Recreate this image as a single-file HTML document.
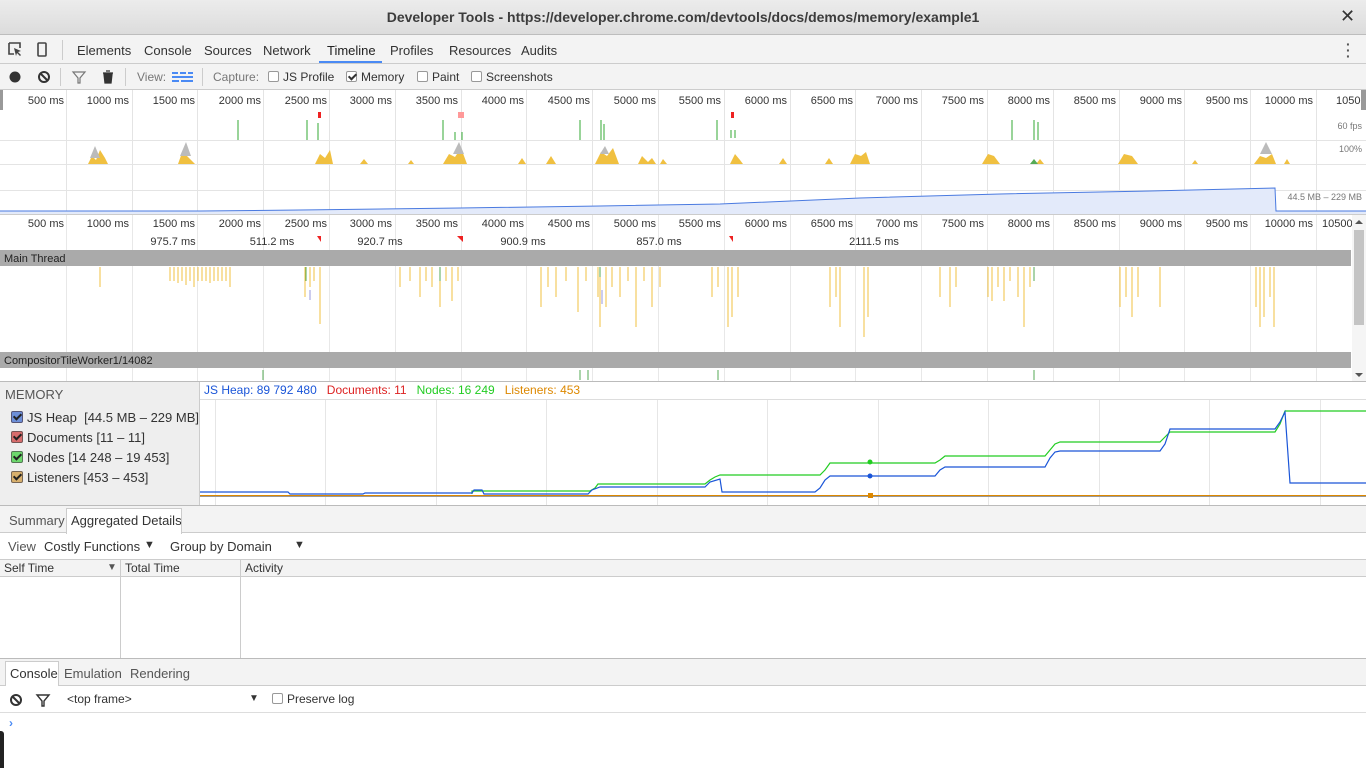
<!DOCTYPE html>
<html><head><meta charset="utf-8"><style>
*{box-sizing:border-box;margin:0;padding:0}
body{width:1366px;height:768px;overflow:hidden;background:#fff;font-family:"Liberation Sans","DejaVu Sans",sans-serif;font-size:12px;color:#333;position:relative}
.a{position:absolute;white-space:nowrap}
.cb{display:inline-block;width:11px;height:11px;border:1px solid #999;border-radius:2px;background:#fff;vertical-align:-1px;margin-right:4px;position:relative}
.cbk:after{content:"";position:absolute;left:3px;top:0px;width:3px;height:6px;border:solid #333;border-width:0 2px 2px 0;transform:rotate(45deg)}
.ml .cb{width:12px;height:12px}
.ml .cb:after{border-color:#222}
</style></head><body>
<div class="a" style="left:0;top:0;width:1366px;height:35px;background:linear-gradient(#ececec,#dcdcdc);border-bottom:1px solid #bdbdbd"></div>
<div class="a" style="left:0;top:9px;width:1366px;text-align:center;font-weight:bold;font-size:14px;color:#3c3c3c">Developer Tools - https://developer.chrome.com/devtools/docs/demos/memory/example1</div>
<div class="a" style="left:1340px;top:6px;font-size:18px;color:#333;font-weight:bold">✕</div>
<div class="a" style="left:0;top:35px;width:1366px;height:29px;background:#f3f3f3;border-bottom:1px solid #ccc"></div>
<svg class="a" style="left:8px;top:42px" width="40" height="16"><path d="M1 1h11v5M1 1v11h5" fill="none" stroke="#444" stroke-width="1.6"/><path d="M6 6l7 3-3 1 3 3-1 1-3-3-1 3z" fill="#444"/><rect x="30" y="1" width="8" height="13" rx="1" fill="none" stroke="#444" stroke-width="1.6"/></svg>
<div class="a" style="left:62px;top:40px;width:1px;height:20px;background:#ccc"></div>
<div class="a" style="top:43px;left:77px;font-size:13px;color:#333">Elements</div>
<div class="a" style="top:43px;left:144px;font-size:13px">Console</div>
<div class="a" style="top:43px;left:204px;font-size:13px">Sources</div>
<div class="a" style="top:43px;left:263px;font-size:13px">Network</div>
<div class="a" style="top:43px;left:327px;font-size:13px;color:#222">Timeline</div>
<div class="a" style="top:61px;left:319px;width:63px;height:2px;background:#4a8af4"></div>
<div class="a" style="top:43px;left:390px;font-size:13px">Profiles</div>
<div class="a" style="top:43px;left:449px;font-size:13px">Resources</div>
<div class="a" style="top:43px;left:521px;font-size:13px">Audits</div>
<div class="a" style="top:41px;left:1346px;font-size:14px;font-weight:bold;line-height:6px;color:#555">·<br>·<br>·</div>
<div class="a" style="left:0;top:64px;width:1366px;height:26px;background:#f3f3f3;border-bottom:1px solid #ccc"></div>
<svg class="a" style="left:8px;top:70px" width="110" height="14"><circle cx="7" cy="7" r="5.5" fill="#333"/><circle cx="36" cy="7" r="5" fill="none" stroke="#333" stroke-width="2"/><path d="M32.5 3.5l7 7" stroke="#333" stroke-width="2"/><path d="M65 2h12l-5 6v5h-2v-5z" fill="none" stroke="#777" stroke-width="1.2"/><path d="M95 3h10M96 4h8l-1 9h-6z M98 1h4" fill="#333" stroke="#333" stroke-width="1.3"/></svg>
<div class="a" style="left:60px;top:68px;width:1px;height:18px;background:#ccc"></div>
<div class="a" style="left:125px;top:68px;width:1px;height:18px;background:#ccc"></div>
<div class="a" style="top:70px;left:137px;color:#777">View:</div>
<svg class="a" style="left:172px;top:72px" width="22" height="10"><path d="M0 1h6M8 1h6M16 1h5M0 5h21M0 9h7M9 9h12" stroke="#4a8af4" stroke-width="2"/></svg>
<div class="a" style="left:202px;top:68px;width:1px;height:18px;background:#ccc"></div>
<div class="a" style="top:70px;left:213px;color:#777">Capture:</div>
<div class="a" style="top:70px;left:268px"><span class="cb"></span>JS Profile</div>
<div class="a" style="top:70px;left:346px"><span class="cb cbk"></span>Memory</div>
<div class="a" style="top:70px;left:417px"><span class="cb"></span>Paint</div>
<div class="a" style="top:70px;left:471px"><span class="cb"></span>Screenshots</div>
<svg class="a" style="left:0;top:90px" width="1366" height="292" font-family="Liberation Sans,sans-serif" font-size="11" fill="#333">
<g stroke="#e4e4e4" stroke-width="1">
<path d="M66.5 0v124M132.5 0v124M197.5 0v124M263.5 0v124M329.5 0v124M395.5 0v124M461.5 0v124M526.5 0v124M592.5 0v124M658.5 0v124M724.5 0v124M790.5 0v124M855.5 0v124M921.5 0v124M987.5 0v124M1053.5 0v124M1119.5 0v124M1184.5 0v124M1250.5 0v124M1316.5 0v124"/>
<path d="M0 50.5h1366M0 100.5h1366M0 74.5h1366"/>
</g>
<g text-anchor="end">
<text x="64" y="14">500 ms</text><text x="129" y="14">1000 ms</text><text x="195" y="14">1500 ms</text><text x="261" y="14">2000 ms</text><text x="327" y="14">2500 ms</text><text x="392" y="14">3000 ms</text><text x="458" y="14">3500 ms</text><text x="524" y="14">4000 ms</text><text x="590" y="14">4500 ms</text><text x="656" y="14">5000 ms</text><text x="721" y="14">5500 ms</text><text x="787" y="14">6000 ms</text><text x="853" y="14">6500 ms</text><text x="918" y="14">7000 ms</text><text x="984" y="14">7500 ms</text><text x="1050" y="14">8000 ms</text><text x="1116" y="14">8500 ms</text><text x="1182" y="14">9000 ms</text><text x="1248" y="14">9500 ms</text><text x="1313" y="14">10000 ms</text>
<text x="1362" y="39" font-size="9" fill="#777">60 fps</text><text x="1362" y="62" font-size="9" fill="#777">100%</text><text x="1362" y="110" font-size="9" fill="#777">44.5 MB – 229 MB</text>
</g>
<text x="1336" y="14">10500</text>
<rect x="0" y="0" width="3" height="20" fill="#999"/>
<rect x="1361" y="0" width="5" height="20" fill="#999"/>
<g fill="none" stroke="#3a3" stroke-width="1">
<path d="M238 30v20M307 30v20M318 33v17M443 30v20M455 42v8M462 42v8M580 30v20M601 30v20M604 34v16M717 30v20M731 40v8M735 40v8M1012 30v20M1034 30v20M1038 32v18"/>
</g>
<rect x="318" y="22" width="3" height="6" fill="#e22"/><rect x="458" y="22" width="6" height="6" fill="#f99"/><rect x="731" y="22" width="3" height="6" fill="#e22"/>
<g fill="#f0c040">
<path d="M88 74l4-8 4 4 4-10 5 8 3 6zM178 74l5-14 4 6 4 4 4 4zM315 74l5-10 5 4 5-8 3 14zM360 74l4-5 4 5zM408 74l3-4 3 4zM443 74l6-10 6 3 6-9 6 16zM518 74l4-6 4 6zM546 74l5-8 5 8zM595 74l6-12 6 4 6-8 6 16zM638 74l4-8 6 6 4-4 4 6zM660 74l3-5 4 5zM730 74l5-10 5 6 3 4zM779 74l4-6 4 6zM825 74l4-6 4 6zM850 74l5-10 6 2 5-4 4 12zM982 74l6-10 6 2 6 8zM1036 74l4-5 4 5zM1118 74l6-10 8 2 6 8zM1192 74l3-4 3 4zM1254 74l6-8 6 2 6-4 4 10zM1284 74l3-5 3 5z"/>
</g>
<g fill="#bbb"><path d="M90 68l5-12 5 12zM180 66l6-14 5 14zM453 64l6-12 5 12zM600 64l5-8 4 8zM1260 64l6-12 6 12z"/></g>
<path d="M1030 74l4-5 4 5z" fill="#5a5"/>
<path d="M0 121 L200 121 L300 120 L460 118 L600 116 L720 114 L860 108 L1000 104 L1150 101 L1275 98 L1276 121 L1366 121 L1366 124 L0 124Z" fill="#e3eafa"/>
<path d="M0 121 L200 121 L300 120 L460 118 L600 116 L720 114 L860 108 L1000 104 L1150 101 L1275 98 L1276 121 L1366 121" fill="none" stroke="#4a7ae0" stroke-width="1"/>
<rect x="0" y="124" width="1366" height="1" fill="#ccc"/>
<g stroke="#e8e8e8"><path d="M66.5 125v167M132.5 125v167M197.5 125v167M263.5 125v167M329.5 125v167M395.5 125v167M461.5 125v167M526.5 125v167M592.5 125v167M658.5 125v167M724.5 125v167M790.5 125v167M855.5 125v167M921.5 125v167M987.5 125v167M1053.5 125v167M1119.5 125v167M1184.5 125v167M1250.5 125v167M1316.5 125v167"/></g>
<g text-anchor="end">
<text x="64" y="137">500 ms</text><text x="129" y="137">1000 ms</text><text x="195" y="137">1500 ms</text><text x="261" y="137">2000 ms</text><text x="327" y="137">2500 ms</text><text x="392" y="137">3000 ms</text><text x="458" y="137">3500 ms</text><text x="524" y="137">4000 ms</text><text x="590" y="137">4500 ms</text><text x="656" y="137">5000 ms</text><text x="721" y="137">5500 ms</text><text x="787" y="137">6000 ms</text><text x="853" y="137">6500 ms</text><text x="918" y="137">7000 ms</text><text x="984" y="137">7500 ms</text><text x="1050" y="137">8000 ms</text><text x="1116" y="137">8500 ms</text><text x="1182" y="137">9000 ms</text><text x="1248" y="137">9500 ms</text><text x="1313" y="137">10000 ms</text>
</g>
<text x="1322" y="137">10500</text>
<g text-anchor="middle"><text x="173" y="155">975.7 ms</text><text x="272" y="155">511.2 ms</text><text x="380" y="155">920.7 ms</text><text x="523" y="155">900.9 ms</text><text x="659" y="155">857.0 ms</text><text x="874" y="155">2111.5 ms</text></g>
<path d="M317 146h4v6zM457 146h6v6zM729 146h4v6z" fill="#e22"/>
<rect x="0" y="160" width="1351" height="16" fill="#aaa"/>
<text x="4" y="172" fill="#222">Main Thread</text>
<rect x="0" y="262" width="1351" height="16" fill="#aaa"/>
<text x="4" y="274" fill="#222">CompositorTileWorker1/14082</text>
<g stroke="#f0c040" stroke-width="1">
<path d="M100 177v20M170 177v14M174 177v14M178 177v16M182 177v14M186 177v18M190 177v14M194 177v20M198 177v14M202 177v14M206 177v14M210 177v16M214 177v14M218 177v14M222 177v14M226 177v14M230 177v20M305 177v30M310 177v20M314 177v14M320 177v57M400 177v20M410 177v14M420 177v30M426 177v14M432 177v20M440 177v40M446 177v14M452 177v34M458 177v14M541 177v40M548 177v20M556 177v30M566 177v14M578 177v45M586 177v14M598 177v30M600 177v60M606 177v40M612 177v20M620 177v30M628 177v14M636 177v60M644 177v14M652 177v40M660 177v20M712 177v30M718 177v20M728 177v60M732 177v50M738 177v30M830 177v40M836 177v30M840 177v60M864 177v70M868 177v50M940 177v30M950 177v40M956 177v20M988 177v30M992 177v34M998 177v20M1004 177v34M1010 177v14M1018 177v30M1024 177v60M1030 177v20M1120 177v40M1126 177v30M1132 177v50M1138 177v30M1160 177v40M1256 177v40M1260 177v60M1264 177v50M1270 177v30M1274 177v60"/>
</g>
<g stroke="#5a5"><path d="M306 177v14M440 177v14M600 177v10M1034 177v14"/></g>
<g stroke="#9a9adc"><path d="M602 200v14M310 200v10"/></g>
<g stroke="#5a5"><path d="M263 280v10M580 280v10M588 280v10M718 280v10M1034 280v10"/></g>
<rect x="1352" y="125" width="14" height="167" fill="#f5f5f5"/>
<rect x="1354" y="140" width="10" height="95" fill="#c4c4c4"/>
<path d="M1355 134l4-4 4 4zM1355 283l4 4 4-4z" fill="#555"/>
<rect x="0" y="291" width="1366" height="1" fill="#bbb"/>
</svg>
<div class="a" style="left:0;top:382px;width:200px;height:124px;background:#eee;border-right:1px solid #ccc"></div>
<div class="a" style="left:5px;top:387px;font-size:13px;color:#555">MEMORY</div>
<div class="ml">
<div class="a" style="left:11px;top:410px;font-size:13px"><span class="cb cbk" style="background:#6d8fd8;border-color:#557"></span>JS Heap&nbsp; [44.5 MB – 229 MB]</div>
<div class="a" style="left:11px;top:430px;font-size:13px"><span class="cb cbk" style="background:#d86d6d;border-color:#755"></span>Documents [11 – 11]</div>
<div class="a" style="left:11px;top:450px;font-size:13px"><span class="cb cbk" style="background:#6dd86d;border-color:#575"></span>Nodes [14 248 – 19 453]</div>
<div class="a" style="left:11px;top:470px;font-size:13px"><span class="cb cbk" style="background:#d8b06d;border-color:#765"></span>Listeners [453 – 453]</div>
</div>
<div class="a" style="left:204px;top:383px;font-size:12px"><span style="color:#1a55d8">JS Heap: 89 792 480</span>&nbsp;&nbsp; <span style="color:#d22">Documents: 11</span>&nbsp;&nbsp; <span style="color:#2c2">Nodes: 16 249</span>&nbsp;&nbsp; <span style="color:#d80">Listeners: 453</span></div>
<svg class="a" style="left:200px;top:382px" width="1166" height="124">
<path d="M0 17.5h1166" stroke="#ddd"/>
<g stroke="#e6e6e6"><path d="M15.5 18v106M125.5 18v106M236.5 18v106M346.5 18v106M457.5 18v106M567.5 18v106M678.5 18v106M788.5 18v106M899.5 18v106M1009.5 18v106M1120.5 18v106"/></g>
<path d="M0 113.5h1166" stroke="#d80"/>
<path d="M0 114.5h1166" stroke="#999"/>
<polyline fill="none" stroke="#2c2" stroke-width="1.2" points="272,112 272,109 390,109 395,106 398,102 505,102 510,98 515,95 520,93 620,93 625,88 630,81 735,81 740,78 745,74 845,74 850,68 855,62 860,60 960,60 965,55 970,50 1075,50 1080,42 1085,29 1166,29"/>
<polyline fill="none" stroke="#1a55d8" stroke-width="1.2" points="0,110 88,110 90,112 163,112 165,111 272,111 274,108 282,108 284,112 388,112 392,108 400,105 505,105 510,100 520,97 522,110 615,110 620,106 625,98 630,94 735,94 740,88 745,85 845,85 850,76 855,70 860,69 960,69 965,62 970,47 1075,47 1080,40 1085,30 1090,101 1166,101"/>
<circle cx="670" cy="80" r="2.5" fill="#2c2"/><circle cx="670" cy="94" r="2.5" fill="#1a55d8"/><rect x="668" y="111" width="5" height="5" fill="#d80"/>
</svg>
<div class="a" style="left:0;top:505px;width:1366px;height:1px;background:#bbb"></div>
<div class="a" style="left:0;top:506px;width:1366px;height:27px;background:#f3f3f3;border-bottom:1px solid #ccc"></div>
<div class="a" style="left:9px;top:513px;color:#555;font-size:13px">Summary</div>
<div class="a" style="left:66px;top:508px;width:116px;height:26px;background:#fff;border:1px solid #ccc;border-bottom:none"></div>
<div class="a" style="left:71px;top:513px;font-size:13px;color:#333">Aggregated Details</div>
<div class="a" style="left:8px;top:539px;color:#555;font-size:13px">View</div>
<div class="a" style="left:44px;top:539px;font-size:13px">Costly Functions</div>
<div class="a" style="left:144px;top:539px;font-size:11px">▼</div>
<div class="a" style="left:170px;top:539px;font-size:13px">Group by Domain</div>
<div class="a" style="left:294px;top:539px;font-size:11px">▼</div>
<div class="a" style="left:0;top:559px;width:1366px;height:18px;background:#f3f3f3;border-top:1px solid #ccc;border-bottom:1px solid #ccc"></div>
<div class="a" style="left:4px;top:561px">Self Time</div>
<div class="a" style="left:107px;top:562px;font-size:10px;color:#555">▼</div>
<div class="a" style="left:125px;top:561px">Total Time</div>
<div class="a" style="left:245px;top:561px">Activity</div>
<div class="a" style="left:120px;top:559px;width:1px;height:99px;background:#ccc"></div>
<div class="a" style="left:240px;top:559px;width:1px;height:99px;background:#ccc"></div>
<div class="a" style="left:0;top:658px;width:1366px;height:28px;background:#f3f3f3;border-top:1px solid #bbb;border-bottom:1px solid #ccc"></div>
<div class="a" style="left:5px;top:661px;width:54px;height:25px;background:#fff;border:1px solid #ccc;border-bottom:none"></div>
<div class="a" style="left:10px;top:666px;font-size:13px">Console</div>
<div class="a" style="left:64px;top:666px;font-size:13px;color:#555">Emulation</div>
<div class="a" style="left:130px;top:666px;font-size:13px;color:#555">Rendering</div>
<div class="a" style="left:0;top:712px;width:1366px;height:1px;background:#ddd"></div>
<svg class="a" style="left:9px;top:693px" width="42" height="14"><circle cx="7" cy="7" r="5" fill="none" stroke="#333" stroke-width="2"/><path d="M3.5 3.5l7 7" stroke="#333" stroke-width="2"/><path d="M28 2h12l-5 6v5h-2v-5z" fill="none" stroke="#333" stroke-width="1.4"/></svg>
<div class="a" style="left:67px;top:692px">&lt;top frame&gt;</div>
<div class="a" style="left:249px;top:693px;font-size:10px;color:#333">▼</div>
<div class="a" style="left:272px;top:692px;color:#333"><span class="cb"></span>Preserve log</div>
<div class="a" style="left:9px;top:716px;color:#4a8af4;font-size:12px;font-weight:bold">›</div>
<div class="a" style="left:0;top:731px;width:4px;height:37px;background:#222;border-radius:0 3px 0 0"></div>
</body></html>
